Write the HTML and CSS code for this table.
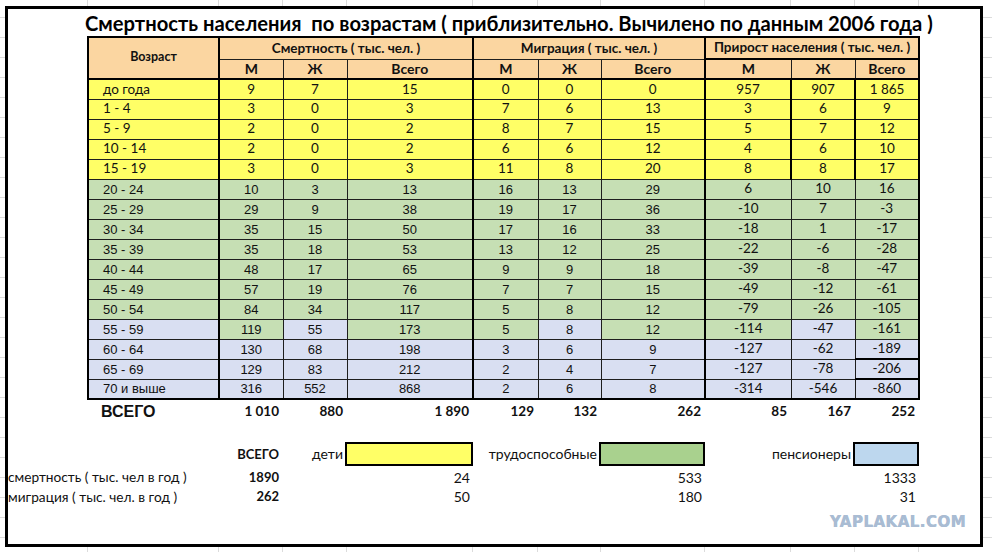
FILE: index.html
```html
<!DOCTYPE html>
<html lang="ru">
<head>
<meta charset="utf-8">
<title>Смертность населения по возрастам</title>
<link rel="stylesheet" href="styles.css">
</head>
<body>
<div class="frame">
  <h1 class="title">Смертность населения&nbsp; по возрастам ( приблизительно. Вычилено по данным 2006 года )</h1>
  <table class="grid">
    <colgroup>
      <col class="w-age"><col class="w-64"><col class="w-64"><col class="w-126"><col class="w-65"><col class="w-63"><col class="w-104"><col class="w-86"><col class="w-64"><col class="w-64">
    </colgroup>
    <thead>
      <tr class="h1">
        <th rowspan="2" class="age-h">Возраст</th>
        <th colspan="3" class="s">Смертность ( тыс. чел. )</th>
        <th colspan="3" class="s">Миграция ( тыс. чел. )</th>
        <th colspan="3" class="s bb">Прирост населения ( тыс. чел. )</th>
      </tr>
      <tr class="h2">
        <th class="s">М</th><th>Ж</th><th>Всего</th>
        <th class="s">М</th><th>Ж</th><th>Всего</th>
        <th class="s">М</th><th>Ж</th><th>Всего</th>
      </tr>
    </thead>
    <tbody>
      <tr class="y"><td class="lbl">до года</td><td class="s">9</td><td>7</td><td>15</td><td class="s">0</td><td>0</td><td>0</td><td class="s p">957</td><td class="p k">907</td><td class="p k">1 865</td></tr>
      <tr class="y"><td class="lbl">1 - 4</td><td class="s">3</td><td>0</td><td>3</td><td class="s">7</td><td>6</td><td>13</td><td class="s p">3</td><td class="p k">6</td><td class="p k">9</td></tr>
      <tr class="y"><td class="lbl">5 - 9</td><td class="s">2</td><td>0</td><td>2</td><td class="s">8</td><td>7</td><td>15</td><td class="s p">5</td><td class="p k">7</td><td class="p k">12</td></tr>
      <tr class="y"><td class="lbl">10 - 14</td><td class="s">2</td><td>0</td><td>2</td><td class="s">6</td><td>6</td><td>12</td><td class="s p">4</td><td class="p k">6</td><td class="p k">10</td></tr>
      <tr class="y"><td class="lbl">15 - 19</td><td class="s">3</td><td>0</td><td>3</td><td class="s">11</td><td>8</td><td>20</td><td class="s p">8</td><td class="p k">8</td><td class="p k">17</td></tr>
      <tr class="g"><td class="lbl">20 - 24</td><td class="s">10</td><td>3</td><td>13</td><td class="s">16</td><td>13</td><td>29</td><td class="s p">6</td><td class="p">10</td><td class="p">16</td></tr>
      <tr class="g"><td class="lbl">25 - 29</td><td class="s">29</td><td>9</td><td>38</td><td class="s">19</td><td>17</td><td>36</td><td class="s p">-10</td><td class="p">7</td><td class="p">-3</td></tr>
      <tr class="g"><td class="lbl">30 - 34</td><td class="s">35</td><td>15</td><td>50</td><td class="s">17</td><td>16</td><td>33</td><td class="s p">-18</td><td class="p">1</td><td class="p">-17</td></tr>
      <tr class="g"><td class="lbl">35 - 39</td><td class="s">35</td><td>18</td><td>53</td><td class="s">13</td><td>12</td><td>25</td><td class="s p">-22</td><td class="p">-6</td><td class="p">-28</td></tr>
      <tr class="g"><td class="lbl">40 - 44</td><td class="s">48</td><td>17</td><td>65</td><td class="s">9</td><td>9</td><td>18</td><td class="s p">-39</td><td class="p">-8</td><td class="p">-47</td></tr>
      <tr class="g"><td class="lbl">45 - 49</td><td class="s">57</td><td>19</td><td>76</td><td class="s">7</td><td>7</td><td>15</td><td class="s p">-49</td><td class="p">-12</td><td class="p">-61</td></tr>
      <tr class="g"><td class="lbl">50 - 54</td><td class="s">84</td><td>34</td><td>117</td><td class="s">5</td><td>8</td><td>12</td><td class="s p">-79</td><td class="p">-26</td><td class="p">-105</td></tr>
      <tr class="b"><td class="lbl">55 - 59</td><td class="s cg">119</td><td>55</td><td class="cg">173</td><td class="s cg">5</td><td>8</td><td class="cg">12</td><td class="s p cg">-114</td><td class="p">-47</td><td class="p cg">-161</td></tr>
      <tr class="b"><td class="lbl">60 - 64</td><td class="s">130</td><td>68</td><td>198</td><td class="s">3</td><td>6</td><td>9</td><td class="s p">-127</td><td class="p">-62</td><td class="p">-189</td></tr>
      <tr class="b"><td class="lbl">65 - 69</td><td class="s">129</td><td>83</td><td>212</td><td class="s">2</td><td>4</td><td>7</td><td class="s p">-127</td><td class="p">-78</td><td class="p tt">-206</td></tr>
      <tr class="b"><td class="lbl">70 и выше</td><td class="s">316</td><td>552</td><td>868</td><td class="s">2</td><td>6</td><td>8</td><td class="s p">-314</td><td class="p">-546</td><td class="p tt">-860</td></tr>
    </tbody>
  </table>
  <table class="totals">
    <colgroup>
      <col class="w-age"><col class="w-64"><col class="w-64"><col class="w-126"><col class="w-65"><col class="w-63"><col class="w-104"><col class="w-86"><col class="w-64"><col class="w-64">
    </colgroup>
    <tr>
      <td class="tot-lbl">ВСЕГО</td>
      <td>1 010</td><td>880</td><td>1 890</td>
      <td>129</td><td>132</td><td>262</td>
      <td>85</td><td>167</td><td>252</td>
    </tr>
  </table>
  <table class="summary">
    <colgroup>
      <col class="w-lab"><col class="w-64"><col class="w-64"><col class="w-126"><col class="w-128"><col class="w-104"><col class="w-150"><col class="w-64">
    </colgroup>
    <tr class="r-legend">
      <td></td>
      <td class="strong">ВСЕГО</td>
      <td>дети</td>
      <td class="box box-y"></td>
      <td>трудоспособные</td>
      <td class="box box-g"></td>
      <td>пенсионеры</td>
      <td class="box box-b"></td>
    </tr>
    <tr class="r-one">
      <td class="name">смертность ( тыс. чел в год )</td>
      <td class="strong">1890</td>
      <td></td><td>24</td><td></td><td>533</td><td></td><td>1333</td>
    </tr>
    <tr class="r-two">
      <td class="name">миграция ( тыс. чел. в год )</td>
      <td class="strong">262</td>
      <td></td><td>50</td><td></td><td>180</td><td></td><td>31</td>
    </tr>
  </table>
  <div class="mark">YAPLAKAL.COM</div>
</div>
</body>
</html>
```

FILE: styles.css
```css
* { box-sizing: border-box; }
html, body { margin: 0; padding: 0; }
body {
  width: 992px;
  height: 552px;
  overflow: hidden;
  background:
    linear-gradient(#dcdcdc, #dcdcdc) 87px 0 / 1px 100% no-repeat,
    linear-gradient(#dcdcdc, #dcdcdc) 218px 0 / 1px 100% no-repeat,
    linear-gradient(#dcdcdc, #dcdcdc) 282px 0 / 1px 100% no-repeat,
    linear-gradient(#dcdcdc, #dcdcdc) 346px 0 / 1px 100% no-repeat,
    linear-gradient(#dcdcdc, #dcdcdc) 472px 0 / 1px 100% no-repeat,
    linear-gradient(#dcdcdc, #dcdcdc) 537px 0 / 1px 100% no-repeat,
    linear-gradient(#dcdcdc, #dcdcdc) 600px 0 / 1px 100% no-repeat,
    linear-gradient(#dcdcdc, #dcdcdc) 704px 0 / 1px 100% no-repeat,
    linear-gradient(#dcdcdc, #dcdcdc) 790px 0 / 1px 100% no-repeat,
    linear-gradient(#dcdcdc, #dcdcdc) 854px 0 / 1px 100% no-repeat,
    linear-gradient(#dcdcdc, #dcdcdc) 918px 0 / 1px 100% no-repeat,
    repeating-linear-gradient(to bottom, transparent 0 17px, #dcdcdc 17px 18px, transparent 18px 20px),
    #ffffff;
  font-family: Lato, "Liberation Sans", sans-serif;
  color: #111;
}

.frame {
  margin: 6px 0 0 5px;
  width: 978px;
  height: 541px;
  border: 3px solid #000;
  background: #fff;
  display: flex;
  flex-direction: column;
}

.title {
  margin: 0;
  height: 27px;
  padding-left: 77px;
  font: 700 20.2px/29px Lato, sans-serif;
  color: #000;
  white-space: nowrap;
}

/* widths */
.w-age { width: 131px; }
.w-64 { width: 64px; }
.w-65 { width: 65px; }
.w-63 { width: 63px; }
.w-126 { width: 126px; }
.w-104 { width: 104px; }
.w-86 { width: 86px; }
.w-lab { width: 210px; }
.w-128 { width: 128px; }
.w-150 { width: 150px; }

/* main grid */
.grid {
  margin-left: 79px;
  width: 831px;
  table-layout: fixed;
  border-collapse: collapse;
  border: 2px solid #000;
}
.grid th, .grid td {
  border: 1px solid #1e1e1e;
  padding: 0;
  height: 20px;
  text-align: center;
  white-space: nowrap;
  overflow: hidden;
  font: 13px/1 "Liberation Sans", Arial, sans-serif;
  color: #111;
}
.grid th {
  background: #fbd6a1;
  font: 700 13.5px/1 Lato, sans-serif;
  color: #111;
}
.grid .h1 th { height: 22px; }
.grid .h2 th { border-bottom: 2px solid #000; font-size: 14px; }
.grid th.age-h { border-bottom: 2px solid #000; padding-bottom: 2px; font-size: 12.5px; }
.grid .s { border-left: 2px solid #000; }
.grid th.bb { border-bottom: 2px solid #000; }
.grid .k { border-left: 2px solid #000; }
.grid .tt { border-top: 2px solid #000; }

.grid td.lbl { text-align: left; padding-left: 14px; }
.grid tr.y td { background: #ffff66; font-family: Lato, sans-serif; font-size: 13.5px; }
.grid tr.g td { background: #c6dfb4; }
.grid tr.b td { background: #d9dff2; }
.grid tr.b td.cg { background: #c6dfb4; }
.grid td.p { font-family: Lato, sans-serif; font-size: 13.5px; }

/* totals row */
.totals {
  margin-left: 79px;
  width: 831px;
  table-layout: fixed;
  border-collapse: collapse;
}
.totals td {
  height: 23px;
  padding: 1px 3px 0 0;
  text-align: right;
  font: 700 13.5px/1 Lato, sans-serif;
  color: #111;
  white-space: nowrap;
}
.totals td.tot-lbl {
  text-align: left;
  padding-left: 14px;
  font: 700 16px/1 "Liberation Sans", Arial, sans-serif;
}

/* legend + summary */
.summary {
  margin-top: 19px;
  width: 910px;
  table-layout: fixed;
  border-collapse: collapse;
}
.summary td {
  padding: 0 2px 0 0;
  text-align: right;
  font: 14px/1 Lato, sans-serif;
  color: #111;
  white-space: nowrap;
}
.summary td.name { text-align: left; padding-left: 0; font-size: 13.7px; }
.summary td.strong { font-weight: 700; padding-right: 3px; font-size: 13px; }
.summary .r-legend td { height: 22px; }
.summary .r-one td { height: 22px; padding-top: 2px; }
.summary .r-two td { height: 19px; }
.summary td.box { border: 2px solid #000; padding: 0; }
.box-y { background: #ffff66; }
.box-g { background: #a9d18e; }
.box-b { background: #bdd7ee; }

.mark {
  margin-top: 8px;
  padding-right: 14px;
  text-align: right;
  font: 700 15px/16px "DejaVu Sans", sans-serif;
  color: #a9bcd3;
  letter-spacing: 0.5px;
  text-shadow: 0.5px 0 0 #a9bcd3;
}
```
